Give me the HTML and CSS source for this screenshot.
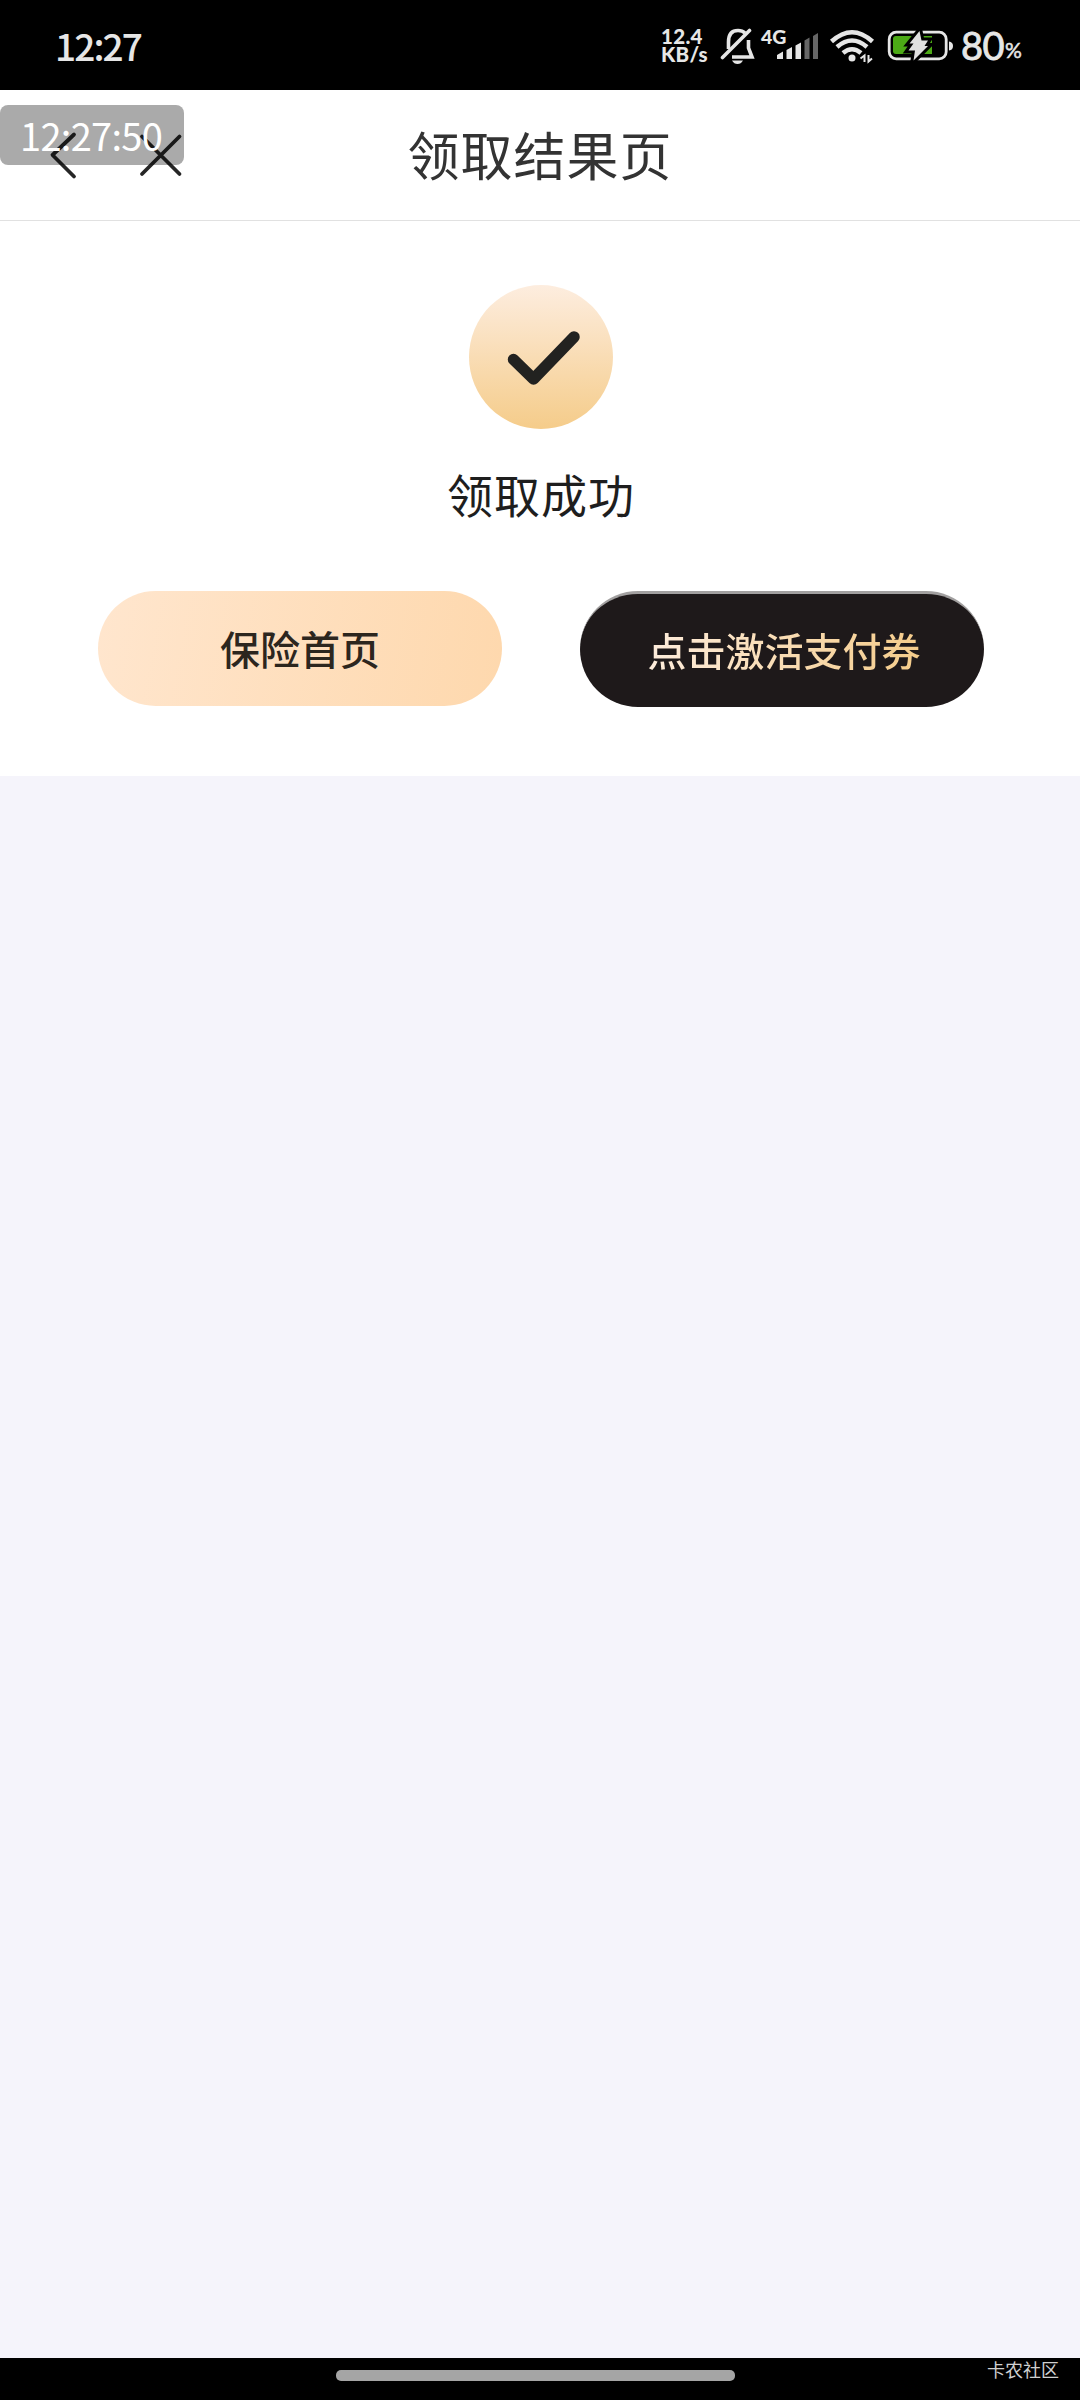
FILE: index.html
```html
<!DOCTYPE html>
<html lang="zh-CN">
<head>
<meta charset="utf-8">
<title>领取结果页</title>
<link rel="stylesheet" href="styles.css">
</head>
<body>
<div class="screen">
  <div class="status">
    <span class="clock">12:27</span>
    <div class="speed">12.4<br>KB/s</div>
    <svg class="bell" width="36" height="40" viewBox="720 26 36 40" fill="none" stroke="#e6e6e6" stroke-width="3.6">
      <path d="M728.500 49V42C728.500 34 732 30.500 738 30.500C741.500 30.500 743 31 745 33M748.500 40V48L752 57H732"/>
      <path d="M722.500 57.500L749.500 30.500" stroke-linecap="round"/>
      <path d="M732 60.500H743Q741 64 737.500 64T732 60.500Z" fill="#e6e6e6" stroke="none"/>
    </svg>
    <div class="cell">
      <span class="net">4G</span>
      <svg width="44" height="28" viewBox="776 32 44 28" fill="#e6e6e6">
        <path d="M777 55L783 51.500V59H777Z M786.500 50L792 47V59H786.500Z M795.500 45.500L801 42.500V59H795.500Z"/>
        <path d="M804.500 40.500L809.500 37.500V59H804.500Z M813 36L818 33V59H813Z" fill="#666"/>
      </svg>
    </div>
    <svg class="wifi" width="46" height="36" viewBox="829 28 46 36" fill="none" stroke="#e6e6e6" stroke-width="4.500">
      <path d="M831.500 41.500Q852 23 872.500 41.500M837 47Q852 34 867 47M843 53Q852 45.500 861 53"/>
      <circle cx="852" cy="58" r="3.500" fill="#e6e6e6" stroke="none"/>
      <path d="M860.500 58.500L864.500 55.500V62M868.500 55V61.500L872 58.500" stroke-width="2"/>
    </svg>
    <svg class="battery" width="68" height="34" viewBox="887 29 68 34">
      <rect x="889.200" y="32.200" width="57" height="26.600" rx="7" fill="none" stroke="#e6e6e6" stroke-width="2.800"/>
      <path d="M896 36H932V54H896Q893 54 893 51V39Q893 36 896 36Z" fill="#4caa16"/>
      <path d="M949 41.500Q953 42 953 46T949 50.500Z" fill="#e6e6e6"/>
      <path d="M919.500 31L909.500 43.500H913.500L908.500 50.500H915L913.500 60.500L928 46H924.500L928 40.500H921.500Z" fill="#e0e0e0" stroke="#000" stroke-width="6" paint-order="stroke"/>
    </svg>
    <span class="level">80</span><span class="percent">%</span>
  </div>

  <header class="nav">
    <svg class="nav-icons" width="140" height="60" viewBox="45 125 140 60" fill="none" stroke="#262626" stroke-width="3.800" stroke-linecap="round" stroke-linejoin="round">
      <path d="M74 134.500L52.500 155L74 176.500M142 136.500L179.500 174M179.500 136.500L142 174"/>
    </svg>
    <h1 class="title">领取结果页</h1>
    <div class="stamp">12:27:50</div>
  </header>

  <main class="result">
    <svg class="done" width="144" height="144" viewBox="0 0 144 144">
      <defs><linearGradient id="gold" x1="0" y1="0" x2="0" y2="1"><stop offset="0" stop-color="#fdeddf"/><stop offset="1" stop-color="#f5cc8a"/></linearGradient></defs>
      <circle cx="72" cy="72" r="72" fill="url(#gold)"/>
      <path d="M44.500 74.500L64.500 94L105 52" fill="none" stroke="#222220" stroke-width="11.500" stroke-linecap="round" stroke-linejoin="round"/>
    </svg>
    <h2 class="message">领取成功</h2>
    <div class="actions">
      <button class="btn btn-light">保险首页</button>
      <button class="btn btn-dark"><span class="gold-text">点击激活支付券</span></button>
    </div>
  </main>

  <footer class="gesture">
    <div class="handle"></div>
    <span class="community">卡农社区</span>
  </footer>
</div>
</body>
</html>
```
FILE: styles.css
```css
* { box-sizing: border-box; }
body { margin: 0; font-family: "Noto Sans CJK SC", sans-serif; }
.screen { width: 1080px; height: 2400px; display: flex; flex-direction: column; background: #f5f4fb; overflow: hidden; }

.status { height: 90px; flex: none; display: flex; align-items: flex-start; background: #000; color: #e6e6e6; font-family: Lato, sans-serif; white-space: nowrap; }
.clock { width: 661px; flex: none; padding-left: 55px; margin-top: 22px; font-size: 37px; line-height: 46px; font-family: "Noto Sans CJK SC", sans-serif; font-weight: 500; letter-spacing: -1.9px; }
.speed { width: 59px; flex: none; margin-top: 27px; font-size: 20.5px; line-height: 18px; font-weight: 900; letter-spacing: .3px; }
.bell { margin-top: 26px; flex: none; }
.cell { position: relative; width: 73px; height: 60px; display: flex; align-items: flex-end; padding-left: 20px; flex: none; }
.net { position: absolute; left: 5px; top: 26px; font-size: 19.5px; line-height: 22px; font-weight: 900; }
.wifi { margin-top: 28px; flex: none; }
.battery { margin: 29px 0 0 12px; flex: none; }
.level { margin: 22px 0 0 6px; width: 44px; font-size: 38px; line-height: 46px; letter-spacing: -.5px; -webkit-text-stroke: .8px #e6e6e6; }
.percent { margin-top: 37px; font-size: 21px; line-height: 25px; -webkit-text-stroke: .5px #e6e6e6; }

.nav { position: relative; height: 131px; flex: none; display: flex; align-items: center; justify-content: center; padding-bottom: 2px; background: #fff; border-bottom: 1px solid #e1e1e1; }
.nav-icons { position: absolute; left: 45px; top: 35px; }
.title { margin: 0; font-size: 52px; line-height: 76px; font-weight: 400; letter-spacing: 1px; color: #333; }
.stamp { position: absolute; left: 0; top: 15px; width: 184px; height: 60px; padding-left: 20px; border-radius: 8px; background: rgba(0,0,0,.335); color: #fff; font-size: 38px; line-height: 60px; letter-spacing: -.7px; }

.result { height: 555px; flex: none; display: flex; flex-direction: column; align-items: center; padding: 63px 0 0 2px; background: #fff; }
.done { flex: none; margin-top: 1px; }
.message { margin: 30px 0 0; font-size: 46px; line-height: 68px; font-weight: 400; letter-spacing: 1px; color: #1e1e1e; }
.actions { display: flex; gap: 78px; margin-top: 64px; }
.btn { width: 404px; height: 115px; padding: 0; border: 0; border-radius: 58px; font: 500 40px/115px "Noto Sans CJK SC", sans-serif; }
.btn-light { background: linear-gradient(100deg, #ffe6ce, #fed8ad); color: #2c261e; line-height: 113px; }
.btn-dark { height: 116px; padding: 0 0 3px 4px; background: #1e191a; border-top: 3px solid #a2a0a0; line-height: 110px; font-size: 39px; }
.gold-text { background: linear-gradient(90deg, #fdecdc, #f5cc8a); background-clip: text; color: transparent; }

.gesture { position: relative; height: 42px; margin-top: auto; display: flex; justify-content: center; padding-top: 12px; background: #000; }
.handle { width: 399px; height: 11px; border-radius: 5px; background: #a5a5a5; margin-right: 9px; }
.community { position: absolute; right: 21px; top: -1px; font-size: 18px; line-height: 24px; color: #d0d0d0; }
```
